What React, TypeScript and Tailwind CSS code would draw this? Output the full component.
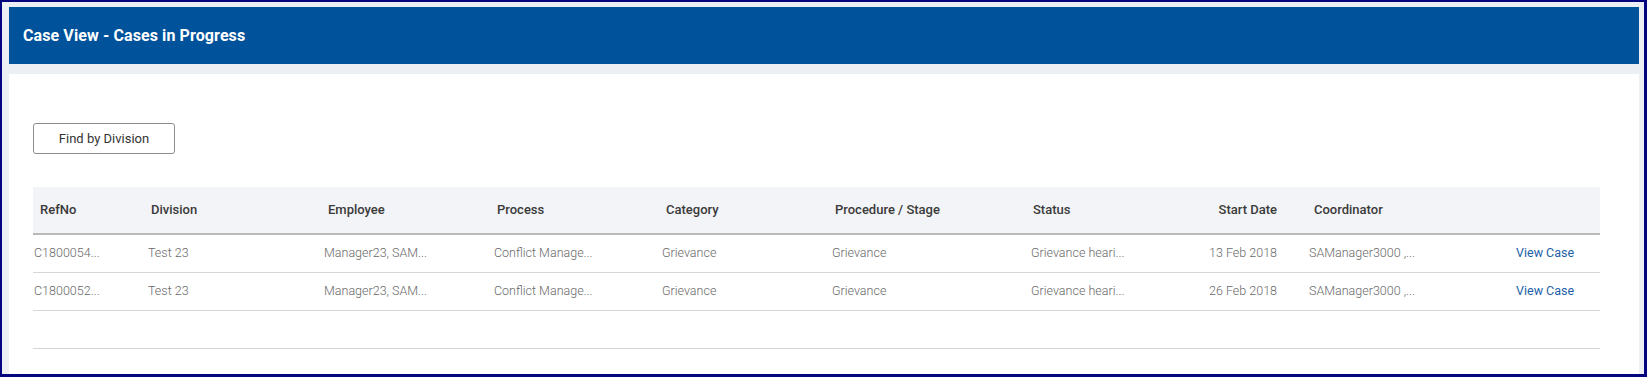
const font = { fontFamily: "Roboto, 'Liberation Sans', sans-serif" };

type CaseRow = {
  ref: string;
  division: string;
  employee: string;
  process: string;
  category: string;
  stage: string;
  status: string;
  start: string;
  coordinator: string;
};

const rows: CaseRow[] = [
  {
    ref: "C1800054...",
    division: "Test 23",
    employee: "Manager23, SAM...",
    process: "Conflict Manage...",
    category: "Grievance",
    stage: "Grievance",
    status: "Grievance heari...",
    start: "13 Feb 2018",
    coordinator: "SAManager3000 ,...",
  },
  {
    ref: "C1800052...",
    division: "Test 23",
    employee: "Manager23, SAM...",
    process: "Conflict Manage...",
    category: "Grievance",
    stage: "Grievance",
    status: "Grievance heari...",
    start: "26 Feb 2018",
    coordinator: "SAManager3000 ,...",
  },
];

const cols =
  "grid grid-cols-[115px_176px_170px_168px_170px_199px_142px_136px_207px_84px] items-center";

export default function App() {
  return (
    <div
      className="w-full border-2 border-r-[3px] border-b-[3px] border-[#05057f] bg-[#eceff3] pt-[5px] pl-[7px] pr-[5px]"
      style={font}
    >
      <div className="flex h-[57px] items-center bg-[#00529b] px-[14px]">
        <h1 className="text-[16px] font-bold tracking-[0.1px] text-white">Case View - Cases in Progress</h1>
      </div>

      <div className="mt-[10px] h-[300px] bg-white pl-[24px] pr-[39px] pt-[49px]">
        <button className="h-[31px] w-[142px] rounded-[3px] border border-[#8c8c8c] bg-white text-[13px] text-[#333]">
          Find by Division
        </button>

        <div className="mt-[33px]">
          <div className={`${cols} h-[48px] border-b-2 border-[#b9b9b9] bg-[#f3f4f7] text-[13px] font-medium text-[#3a3a3a]`}>
            <span className="pl-[7px]">RefNo</span>
            <span className="pl-[3px]">Division</span>
            <span className="pl-[4px]">Employee</span>
            <span className="pl-[3px]">Process</span>
            <span className="pl-[4px]">Category</span>
            <span className="pl-[3px]">Procedure / Stage</span>
            <span className="pl-[2px]">Status</span>
            <span className="pr-[32px] text-right">Start Date</span>
            <span className="pl-[5px]">Coordinator</span>
            <span />
          </div>

          {rows.map((r) => (
            <div
              key={r.ref}
              className={`${cols} h-[38px] border-b border-[#d6d6d6] text-[12.5px] font-light text-[#6a6a6a]`}
            >
              <span className="pl-[1px]">{r.ref}</span>
              <span>{r.division}</span>
              <span>{r.employee}</span>
              <span>{r.process}</span>
              <span>{r.category}</span>
              <span>{r.stage}</span>
              <span>{r.status}</span>
              <span className="pr-[32px] text-right">{r.start}</span>
              <span>{r.coordinator}</span>
              <a href="#" className="text-[12.5px] font-normal text-[#1c5fa8]">
                View Case
              </a>
            </div>
          ))}

          <div className="h-[38px] border-b border-[#d6d6d6]" />
        </div>
      </div>
    </div>
  );
}
